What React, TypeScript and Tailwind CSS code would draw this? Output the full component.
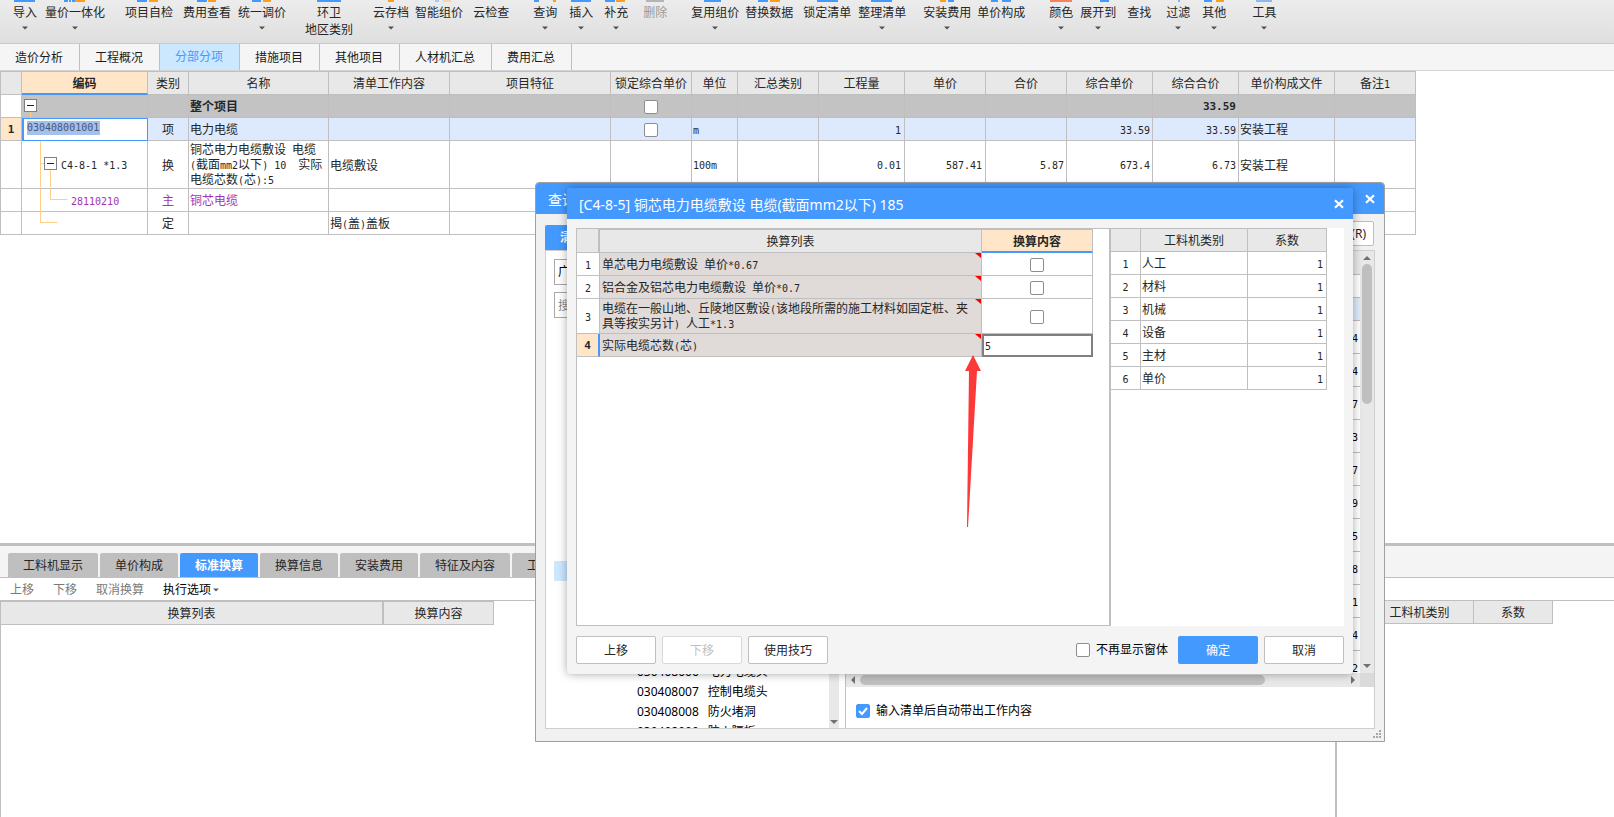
import type { ReactNode } from 'react';
import { clsx } from 'clsx';

const BLUE = '#4499ff';
const ORANGE = '#ff9d1c';

// [x, width, color], drawn inside a 24px wide strip
type Mark = [number, number, string];

interface RibbonItem {
  label: string;
  gap: string;
  marks: Mark[];
  arrow?: boolean;
  disabled?: boolean;
  second?: string;
}

const ribbonItems: RibbonItem[] = [
  { label: '导入', gap: 'ml-[13px]', arrow: true, marks: [[1, 21, BLUE]] },
  { label: '量价一体化', gap: 'ml-2', arrow: true, marks: [[1, 4, BLUE], [6, 2, BLUE], [9, 3, BLUE], [12, 10, ORANGE]] },
  { label: '项目自检', gap: 'ml-5', marks: [[0, 10, BLUE], [12, 9, ORANGE]] },
  { label: '费用查看', gap: 'ml-2.5', marks: [[2, 10, BLUE], [13, 8, ORANGE]] },
  { label: '统一调价', gap: 'ml-[7px]', arrow: true, marks: [[2, 9, BLUE], [13, 8, ORANGE]] },
  { label: '环卫', gap: 'ml-[19px]', second: '地区类别', marks: [[0, 24, BLUE]] },
  { label: '云存档', gap: 'ml-5', arrow: true, marks: [[9, 6, ORANGE]] },
  { label: '智能组价', gap: 'ml-1.5', marks: [[8, 4, '#a3cbfa'], [16, 8, '#f6d3b0']] },
  { label: '云检查', gap: 'ml-2.5', marks: [] },
  { label: '查询', gap: 'ml-6', arrow: true, marks: [[1, 5, BLUE], [20, 3, ORANGE]] },
  { label: '插入', gap: 'ml-3', arrow: true, marks: [[2, 20, BLUE]] },
  { label: '补充', gap: 'ml-[11px]', arrow: true, marks: [[1, 10, BLUE], [12, 9, ORANGE]] },
  { label: '删除', gap: 'ml-[15px]', disabled: true, marks: [[3, 18, '#b5b5b5']] },
  { label: '复用组价', gap: 'ml-6', arrow: true, marks: [[1, 17, BLUE]] },
  { label: '替换数据', gap: 'ml-1.5', marks: [[1, 10, BLUE], [13, 10, ORANGE]] },
  { label: '锁定清单', gap: 'ml-2.5', marks: [[2, 21, BLUE]] },
  { label: '整理清单', gap: 'ml-[7px]', arrow: true, marks: [[1, 21, BLUE]] },
  { label: '安装费用', gap: 'ml-[17px]', arrow: true, marks: [[5, 6, ORANGE], [13, 6, BLUE]] },
  { label: '单价构成', gap: 'ml-1.5', marks: [[2, 7, BLUE], [13, 9, BLUE]] },
  { label: '颜色', gap: 'ml-6', arrow: true, marks: [[1, 22, '#f5825a']] },
  { label: '展开到', gap: 'ml-[7px]', arrow: true, marks: [[14, 9, BLUE]] },
  { label: '查找', gap: 'ml-[11px]', marks: [] },
  { label: '过滤', gap: 'ml-[15px]', arrow: true, marks: [[12, 2, '#7db4f7']] },
  { label: '其他', gap: 'ml-3', arrow: true, marks: [[2, 8, BLUE], [14, 8, ORANGE]] },
  { label: '工具', gap: 'ml-[26px]', arrow: true, marks: [[4, 16, '#8abaf5']] },
];

const pageTabs = [
  { label: '造价分析', width: 'w-20' },
  { label: '工程概况', width: 'w-20' },
  { label: '分部分项', width: 'w-20', active: true },
  { label: '措施项目', width: 'w-20' },
  { label: '其他项目', width: 'w-20' },
  { label: '人材机汇总', width: 'w-[92px]' },
  { label: '费用汇总', width: 'w-20' },
];

const gridColumns = [
  { label: '', width: 'w-[21px]' },
  { label: '编码', width: 'w-[126px]', active: true },
  { label: '类别', width: 'w-[41px]' },
  { label: '名称', width: 'w-[140px]' },
  { label: '清单工作内容', width: 'w-[121px]' },
  { label: '项目特征', width: 'w-[161px]' },
  { label: '锁定综合单价', width: 'w-[81px]' },
  { label: '单位', width: 'w-[46px]' },
  { label: '汇总类别', width: 'w-[81px]' },
  { label: '工程量', width: 'w-[86px]' },
  { label: '单价', width: 'w-[81px]' },
  { label: '合价', width: 'w-[81px]' },
  { label: '综合单价', width: 'w-[86px]' },
  { label: '综合合价', width: 'w-[86px]' },
  { label: '单价构成文件', width: 'w-[96px]' },
  { label: '备注1', width: 'w-[81px]' },
];

const bottomTabs = [
  { label: '工料机显示', width: 'w-[90px]' },
  { label: '单价构成', width: 'w-[78px]' },
  { label: '标准换算', width: 'w-[78px]', active: true },
  { label: '换算信息', width: 'w-[78px]' },
  { label: '安装费用', width: 'w-[78px]' },
  { label: '特征及内容', width: 'w-[90px]' },
  { label: '工程量明细', width: 'w-[90px]' },
];

const treeItems = [
  ['030408001', '电力电缆'],
  ['030408002', '控制电缆'],
  ['030408003', '电缆保护管'],
  ['030408004', '电缆槽盒'],
  ['030408005', '铺砂、盖保护板'],
  ['030408006', '电力电缆头'],
  ['030408007', '控制电缆头'],
  ['030408008', '防火堵洞'],
  ['030408009', '防火隔板'],
];

const quotaDigits = ['4', '4', '7', '3', '7', '9', '5', '8', '1', '4', '2'];

const conversions = [
  { text: '单芯电力电缆敷设 单价*0.67', height: 'h-[23px]' },
  { text: '铝合金及铝芯电力电缆敷设 单价*0.7', height: 'h-[23px]' },
  { text: '电缆在一般山地、丘陵地区敷设(该地段所需的施工材料如固定桩、夹\n具等按实另计) 人工*1.3', height: 'h-[35px]' },
  { text: '实际电缆芯数(芯)', height: 'h-[23px]', value: '5' },
];

const factors = ['人工', '材料', '机械', '设备', '主材', '单价'];

// Chinese at 12px with half-width latin, as the grids show it
function Song({ children }: { children: string }) {
  return (
    <span className="whitespace-pre">
      {children.split(/([\x20-\x7e]+)/).map((part, i) =>
        i % 2 ? (
          <span key={i} className="font-['DejaVu_Sans_Mono',monospace] text-[10px]">{part}</span>
        ) : (
          part
        )
      )}
    </span>
  );
}

function Arrow({ dir = 'down', className = '' }: { dir?: 'down' | 'up' | 'left' | 'right'; className?: string }) {
  const paths = {
    down: 'M0 2h8L4 6z',
    up: 'M0 6h8L4 2z',
    left: 'M6 0v8L2 4z',
    right: 'M2 0v8l4-4z',
  };
  return (
    <svg viewBox="0 0 8 8" className={clsx('shrink-0', className)} aria-hidden="true">
      <path d={paths[dir]} fill="currentColor" />
    </svg>
  );
}

function CloseIcon() {
  return (
    <svg viewBox="0 0 10 10" className="h-2.5 w-2.5" aria-hidden="true">
      <path d="M1 1.2l8 7.6M9 1.2L1 8.8" stroke="#fff" strokeWidth="2.2" fill="none" />
    </svg>
  );
}

function CheckBox({ label, checked }: { label?: string; checked?: boolean }) {
  return (
    <span className="relative inline-flex h-3.5 w-3.5 shrink-0 align-middle">
      <input
        type="checkbox"
        aria-label={label}
        defaultChecked={checked}
        className="peer h-3.5 w-3.5 appearance-none rounded-[2px] border border-[#8e8e8e] bg-white checked:border-[#4499ff] checked:bg-[#4499ff]"
      />
      <svg viewBox="0 0 14 14" className="pointer-events-none absolute inset-0 hidden peer-checked:block" aria-hidden="true">
        <path d="M3 7l3 3 5-6" fill="none" stroke="#fff" strokeWidth="2" />
      </svg>
    </span>
  );
}

function Td({ children, className }: { children?: ReactNode; className?: string }) {
  return <td className={clsx('border-r border-b border-[#bfbfbf] px-px pt-0.5 pb-0', className)}>{children}</td>;
}

function Empty({ count }: { count: number }) {
  return (
    <>
      {Array.from({ length: count }, (_, i) => (
        <Td key={i} />
      ))}
    </>
  );
}

function TreeLines({ d, box }: { d: string; box?: [number, number] }) {
  return (
    <svg viewBox="0 0 125 46" className="absolute top-0 left-0 h-[46px] w-[125px]" aria-hidden="true">
      <path d={d} fill="none" stroke="#ffcf87" />
      {box && (
        <g transform={`translate(${box[0]} ${box[1]})`}>
          <rect x="0.5" y="0.5" width="12" height="12" fill="#fff" stroke="#808080" />
          <path d="M3 6.5h7" stroke="#222" />
        </g>
      )}
    </svg>
  );
}

function Ribbon() {
  return (
    <header className="flex h-11 shrink-0 items-start overflow-hidden border-b border-[#c9c9c9] bg-linear-to-b from-[#ececec] to-[#dfdfdf]">
      {ribbonItems.map((item) => (
        <button
          key={item.label}
          disabled={item.disabled}
          className={clsx(
            'flex shrink-0 flex-col items-center whitespace-nowrap',
            item.gap,
            item.disabled ? 'text-[#9a9a9a]' : 'text-[#262626]'
          )}
        >
          <svg viewBox="0 0 24 2" className="h-0.5 w-6" aria-hidden="true">
            {item.marks.map(([x, w, color]) => (
              <rect key={x} x={x} y="0" width={w} height="2" fill={color} />
            ))}
          </svg>
          <span className="mt-0.5 leading-[17px]">{item.label}</span>
          {item.second && <span className="leading-[17px]">{item.second}</span>}
          {item.arrow && <Arrow className="mt-1 h-[6px] w-[6px] text-[#505050]" />}
        </button>
      ))}
    </header>
  );
}

function PageTabs() {
  return (
    <nav className="flex h-[27px] shrink-0 border-b border-[#d5d5d5] bg-[#f5f5f5]">
      {pageTabs.map((tab) => (
        <button
          key={tab.label}
          className={clsx(
            'shrink-0 border-r border-[#bfbfbf] pr-px',
            tab.width,
            tab.active ? 'bg-[#cce8ff] text-[#4499ff]' : 'pt-0.5 text-[#1a1a1a]'
          )}
        >
          {tab.label}
        </button>
      ))}
    </nav>
  );
}

function MainGrid() {
  return (
    <section className="min-h-0 flex-1 overflow-hidden bg-white">
      <table className="w-[1416px] table-fixed border-separate border-spacing-0 border-t border-l border-[#bfbfbf] leading-[14px] text-[#262626]">
        <thead>
          <tr className="h-[23px]">
            {gridColumns.map((col) => (
              <th
                key={col.label}
                className={clsx(
                  'border-r border-[#bfbfbf] px-0 pt-0.5 pb-0 whitespace-nowrap',
                  col.width,
                  col.active
                    ? 'border-b-2 border-b-[#4499ff] bg-[#ffe6c8] font-bold'
                    : 'border-b bg-[#e8e8e8] font-normal'
                )}
              >
                <Song>{col.label}</Song>
              </th>
            ))}
          </tr>
        </thead>
        <tbody>
          <tr className="h-[23px] bg-[#c3c3c3]">
            <Td className="bg-white" />
            <Td className="relative">
              <TreeLines d="M8.5 17v6" box={[2, 4]} />
            </Td>
            <Td />
            <Td className="font-bold">整个项目</Td>
            <Empty count={2} />
            <Td className="text-center">
              <CheckBox label="锁定综合单价 整个项目" />
            </Td>
            <Empty count={6} />
            <Td className="pr-0.5 text-right font-['DejaVu_Sans_Mono',monospace] text-[11px] font-bold">33.59</Td>
            <Empty count={2} />
          </tr>
          <tr className="h-[23px] bg-[#dde9fd]">
            <Td className="bg-[#ffe6c8] text-center font-['DejaVu_Sans_Mono',monospace] text-[11px] font-bold">1</Td>
            <td className="p-0">
              <div className="flex h-[23px] items-start border border-l-2 border-[#4499ff] bg-white pt-0.5 pl-[3px]">
                <input
                  aria-label="编码"
                  defaultValue="030408001001"
                  className="h-3.5 w-[73px] bg-[#a3c1ee] p-0 font-['DejaVu_Sans_Mono',monospace] text-[10px] text-[#4c566a] outline-none"
                />
              </div>
            </td>
            <Td className="text-center">项</Td>
            <Td>电力电缆</Td>
            <Empty count={2} />
            <Td className="text-center">
              <CheckBox label="锁定综合单价 电力电缆" />
            </Td>
            <Td>
              <Song>m</Song>
            </Td>
            <Td />
            <Td className="pr-[3px] text-right">
              <Song>1</Song>
            </Td>
            <Empty count={2} />
            <Td className="pr-0.5 text-right">
              <Song>33.59</Song>
            </Td>
            <Td className="pr-0.5 text-right">
              <Song>33.59</Song>
            </Td>
            <Td>安装工程</Td>
            <Td />
          </tr>
          <tr className="h-[47px]">
            <Td />
            <Td className="relative">
              <TreeLines d="M18.5 0v47M18.5 22.5h4M28.5 28v19" box={[22, 16]} />
              <span className="relative pl-[38px]">
                <Song>C4-8-1 *1.3</Song>
              </span>
            </Td>
            <Td className="text-center">换</Td>
            <Td>
              <Song>{'铜芯电力电缆敷设 电缆\n(截面mm2以下) 10  实际\n电缆芯数(芯):5'}</Song>
            </Td>
            <Td>电缆敷设</Td>
            <Empty count={2} />
            <Td>
              <Song>100m</Song>
            </Td>
            <Td />
            <Td className="pr-[3px] text-right">
              <Song>0.01</Song>
            </Td>
            <Td className="pr-[3px] text-right">
              <Song>587.41</Song>
            </Td>
            <Td className="pr-0.5 text-right">
              <Song>5.87</Song>
            </Td>
            <Td className="pr-0.5 text-right">
              <Song>673.4</Song>
            </Td>
            <Td className="pr-0.5 text-right">
              <Song>6.73</Song>
            </Td>
            <Td>安装工程</Td>
            <Td />
          </tr>
          <tr className="h-[23px] text-[#a334b4]">
            <Td />
            <Td className="relative">
              <TreeLines d="M18.5 0v23M28.5 0v10.5h17" />
              <span className="relative pl-12">
                <Song>28110210</Song>
              </span>
            </Td>
            <Td className="text-center">主</Td>
            <Td>铜芯电缆</Td>
            <Empty count={12} />
          </tr>
          <tr className="h-[23px]">
            <Td />
            <Td className="relative">
              <TreeLines d="M18.5 0v10.5h17" />
            </Td>
            <Td className="text-center">定</Td>
            <Td />
            <Td>
              <Song>揭(盖)盖板</Song>
            </Td>
            <Empty count={11} />
          </tr>
        </tbody>
      </table>
    </section>
  );
}

function BottomPane() {
  return (
    <section className="flex h-[274px] shrink-0 flex-col border-t-[3px] border-[#bfbfbf] bg-white">
      <nav className="flex h-8 shrink-0 items-end gap-0.5 overflow-hidden border-b border-[#bfbfbf] bg-[#f4f4f4] pl-2">
        {bottomTabs.map((tab) => (
          <button
            key={tab.label}
            className={clsx(
              'h-6 shrink-0 rounded-t-[2px] pt-0.5',
              tab.width,
              tab.active ? 'bg-[#4499ff] font-bold text-white' : 'bg-[#bfbfbf] text-[#262626]'
            )}
          >
            {tab.label}
          </button>
        ))}
      </nav>
      <div className="flex h-[22px] shrink-0 items-center pt-0.5 pl-2.5 text-[#7a7a7a]">
        <button disabled>上移</button>
        <button disabled className="ml-[19px]">下移</button>
        <button disabled className="ml-[19px]">取消换算</button>
        <button className="ml-[19px] flex items-center gap-0.5 text-black">
          执行选项
          <Arrow className="h-[6px] w-[6px] text-[#606060]" />
        </button>
      </div>
      <div className="flex min-h-0 flex-1 border-t border-[#bfbfbf] text-[#262626]">
        <div className="flex-1 border-r-2 border-l border-[#bfbfbf]">
          <table className="w-[493px] table-fixed border-separate border-spacing-0 leading-[14px]">
            <thead>
              <tr className="h-6 bg-[#e8e8e8]">
                <th className="w-[383px] border-t border-r-2 border-b border-[#bfbfbf] px-0 pt-0.5 pb-0 font-normal">换算列表</th>
                <th className="w-[110px] border-t border-r border-b border-[#bfbfbf] px-0 pt-0.5 pb-0 font-normal">换算内容</th>
              </tr>
            </thead>
          </table>
        </div>
        <div className="w-[277px] shrink-0">
          <table className="w-[216px] table-fixed border-separate border-spacing-0 leading-[14px]">
            <thead>
              <tr className="h-[23px] bg-[#e8e8e8]">
                <th className="w-[29px] border-r border-b border-[#bfbfbf] p-0" />
                <th className="w-[108px] border-r border-b border-[#bfbfbf] px-0 pt-0.5 pb-0 font-normal">工料机类别</th>
                <th className="w-[79px] border-r border-b border-[#bfbfbf] px-0 pt-0.5 pb-0 font-normal">系数</th>
              </tr>
            </thead>
          </table>
        </div>
      </div>
    </section>
  );
}

function QueryDialog() {
  return (
    <div
      role="dialog"
      aria-label="查询"
      className="absolute top-[182px] left-[535px] flex h-[560px] w-[850px] flex-col rounded-t-[4px] border border-[#a0a0a0] bg-[#f1f1f1]"
    >
      <div className="flex h-[31px] shrink-0 items-center justify-between rounded-t-[3px] bg-[#4499ff] pr-[9px] pl-3 text-[14px] text-white">
        <h2 className="pt-0.5">查询</h2>
        <button aria-label="关闭查询">
          <CloseIcon />
        </button>
      </div>
      <div className="flex h-9 shrink-0 items-end justify-between pr-2.5 pl-[9px]">
        <button className="h-[25px] w-20 rounded-t-[2px] bg-[#4499ff] pl-[15px] text-left font-bold text-white">清单</button>
        <button className="mb-1 h-[25px] w-20 rounded-[2px] border border-[#bfbfbf] bg-white pr-[7px] text-right text-[#262626]">
          替换(R)
        </button>
      </div>
      <div className="mx-[9px] mb-3 flex min-h-0 flex-1 border border-[#cfcfcf] bg-white text-black">
        <div className="flex w-[283px] shrink-0 flex-col overflow-hidden pt-2 pl-2">
          <select aria-label="定额库" className="h-[26px] w-[267px] shrink-0 appearance-none border border-[#a8a8a8] bg-white px-[3px]">
            <option>广东省清单</option>
          </select>
          <input
            aria-label="搜索"
            placeholder="搜索"
            className="mt-[7px] h-[26px] w-[267px] shrink-0 border border-[#a8a8a8] bg-white px-[3px] placeholder:text-[#8a8a8a]"
          />
          <ul className="mt-[243px]">
            {treeItems.map(([code, name], i) => (
              <li key={code} className={clsx('flex h-5 items-center gap-[9px] pt-0.5 pl-[83px]', i === 0 && 'bg-[#cce8ff]')}>
                <span>{code}</span>
                <span>{name}</span>
              </li>
            ))}
          </ul>
        </div>
        <div className="flex w-2.5 shrink-0 flex-col items-center justify-end bg-[#e8e8e8] pb-0.5 text-[#70707a]">
          <Arrow className="h-2 w-2" />
        </div>
        <div className="ml-[6px] flex min-w-0 flex-1 flex-col border-l border-[#bfbfbf]">
          <div className="flex h-[422px] shrink-0">
            <div className="flex-1 overflow-hidden">
              <table className="w-full border-separate border-spacing-0 leading-[14px]">
                <tbody>
                  <tr className="h-6 bg-[#e8e8e8]">
                    <Td className="border-r-0" />
                  </tr>
                  <tr className="h-[23px]">
                    <Td className="border-r-0" />
                  </tr>
                  <tr className="h-[23px] bg-[#dcedfb]">
                    <Td className="border-r-0" />
                  </tr>
                  {quotaDigits.map((digit, i) => (
                    <tr key={i} className="h-[33px]">
                      <Td className="border-r-0 pr-0.5 text-right">
                        <Song>{digit}</Song>
                      </Td>
                    </tr>
                  ))}
                </tbody>
              </table>
            </div>
            <div className="flex w-3.5 shrink-0 flex-col items-center justify-between bg-[#e8e8e8] py-[3px] text-[#70707a]">
              <Arrow dir="up" className="h-2 w-2" />
              <div className="mt-0.5 mb-auto h-[140px] w-2.5 rounded-full bg-[#bfbfbf]" />
              <Arrow className="h-2 w-2" />
            </div>
          </div>
          <div className="flex h-3.5 shrink-0 items-center bg-[#e8e8e8] pl-[3px] text-[#70707a]">
            <Arrow dir="left" className="h-2 w-2" />
            <div className="ml-[3px] h-2.5 w-[405px] rounded-full bg-[#bfbfbf]" />
            <Arrow dir="right" className="mr-[3px] ml-auto h-2 w-2" />
            <div className="h-3.5 w-3.5 bg-[#dadada]" />
          </div>
          <label className="mt-4 flex items-center gap-1.5 pl-2.5">
            <CheckBox checked />
            输入清单后自动带出工作内容
          </label>
        </div>
      </div>
      <svg viewBox="0 0 8 8" className="absolute right-[3px] bottom-[3px] h-2 w-2" aria-hidden="true">
        <path d="M6 0h2v2H6zM3 3h2v2H3zM6 3h2v2H6zM0 6h2v2H0zM3 6h2v2H3zM6 6h2v2H6z" fill="#a8a8a8" />
      </svg>
    </div>
  );
}

function ConversionDialog() {
  return (
    <div
      role="dialog"
      aria-label="标准换算"
      className="absolute top-[188px] left-[567px] flex h-[486px] w-[786px] flex-col rounded-[4px] bg-[#f4f4f4] text-[#262626] shadow-[0_0_10px_rgba(0,0,0,0.35)]"
    >
      <div className="flex h-[31px] shrink-0 items-center justify-between rounded-t-[3px] bg-[#4499ff] pr-[9px] pl-3 text-[14px] text-white">
        <h2 className="pt-[3px]">[C4-8-5] 铜芯电力电缆敷设 电缆(截面mm2以下) 185</h2>
        <button aria-label="关闭">
          <CloseIcon />
        </button>
      </div>
      <div className="mx-[9px] mt-[9px] flex min-h-0 flex-1 bg-white">
        <div className="w-[535px] shrink-0 border-t border-r-2 border-b border-l border-[#bfbfbf]">
          <table className="w-[516px] table-fixed border-separate border-spacing-0 leading-[14px]">
            <thead>
              <tr className="h-6 bg-[#e8e8e8]">
                <th className="w-[23px] border-r-2 border-b border-[#bfbfbf] p-0" />
                <th className="w-[382px] border-t border-r border-b border-[#bfbfbf] px-0 pt-0.5 pb-0 font-normal">换算列表</th>
                <th className="w-[111px] border-t border-r border-b-2 border-[#bfbfbf] border-b-[#4499ff] bg-[#ffe6c8] px-0 pt-0.5 pb-0 font-bold">
                  换算内容
                </th>
              </tr>
            </thead>
            <tbody>
              {conversions.map((row, i) => (
                <tr key={row.text} className={row.height}>
                  {row.value ? (
                    <Td className="border-r-2 border-r-[#4499ff] bg-[#ffe6c8] text-center font-['DejaVu_Sans_Mono',monospace] text-[11px] font-bold">
                      {i + 1}
                    </Td>
                  ) : (
                    <Td className="text-center">
                      <Song>{String(i + 1)}</Song>
                    </Td>
                  )}
                  <Td className="relative pl-0.5 bg-[#e0dad8]">
                    <Song>{row.text}</Song>
                    <svg viewBox="0 0 6 5" className="absolute top-0 right-0 h-[5px] w-1.5" aria-hidden="true">
                      <path d="M0 0h6v5z" fill="#f00" />
                    </svg>
                  </Td>
                  {row.value ? (
                    <td className="p-0">
                      <input
                        aria-label={row.text}
                        defaultValue={row.value}
                        className="block h-[23px] w-full border-2 border-[#808080] bg-white pt-0.5 pl-px font-['DejaVu_Sans_Mono',monospace] text-[10px]"
                      />
                    </td>
                  ) : (
                    <Td className="text-center">
                      <CheckBox label={row.text} />
                    </Td>
                  )}
                </tr>
              ))}
            </tbody>
          </table>
        </div>
        <div className="flex-1">
          <table className="w-[216px] table-fixed border-separate border-spacing-0 border-t border-[#bfbfbf] leading-[14px]">
            <thead>
              <tr className="h-[23px] bg-[#e8e8e8]">
                <th className="w-[30px] border-r border-b border-[#bfbfbf] p-0" />
                <th className="w-[107px] border-r border-b border-[#bfbfbf] px-0 pt-0.5 pb-0 font-normal">工料机类别</th>
                <th className="w-[79px] border-r border-b border-[#bfbfbf] px-0 pt-0.5 pb-0 font-normal">系数</th>
              </tr>
            </thead>
            <tbody>
              {factors.map((name, i) => (
                <tr key={name} className="h-[23px]">
                  <Td className="text-center">
                    <Song>{String(i + 1)}</Song>
                  </Td>
                  <Td>{name}</Td>
                  <Td className="pr-[3px] text-right">
                    <Song>1</Song>
                  </Td>
                </tr>
              ))}
            </tbody>
          </table>
        </div>
      </div>
      <div className="flex h-12 shrink-0 items-center gap-1.5 px-[9px]">
        <button className="h-7 w-20 rounded-[2px] border border-[#bfbfbf] bg-white pt-0.5">上移</button>
        <button disabled className="h-7 w-20 rounded-[2px] border border-[#d8d8d8] bg-white pt-0.5 text-[#bfbfbf]">
          下移
        </button>
        <button className="h-7 w-20 rounded-[2px] border border-[#bfbfbf] bg-white pt-0.5">使用技巧</button>
        <label className="mr-1 ml-auto flex items-center gap-1.5 text-black">
          <CheckBox />
          不再显示窗体
        </label>
        <button className="h-7 w-20 rounded-[2px] bg-[#4499ff] pt-0.5 text-white">确定</button>
        <button className="h-7 w-20 rounded-[2px] border border-[#bfbfbf] bg-white pt-0.5">取消</button>
      </div>
      {/* pointer to the core count cell */}
      <svg viewBox="0 0 18 172" className="pointer-events-none absolute top-[167px] left-[398px] h-[172px] w-[18px]" aria-hidden="true">
        <path d="M8 0l8 16h-4L3 172H2L4 16H0z" fill="#fd3838" />
      </svg>
    </div>
  );
}

export default function App() {
  return (
    <div className="relative flex h-screen flex-col overflow-hidden bg-white font-['Noto_Sans','Noto_Sans_CJK_SC',sans-serif] text-[12px] leading-4">
      <Ribbon />
      <PageTabs />
      <MainGrid />
      <BottomPane />
      <QueryDialog />
      <ConversionDialog />
    </div>
  );
}
